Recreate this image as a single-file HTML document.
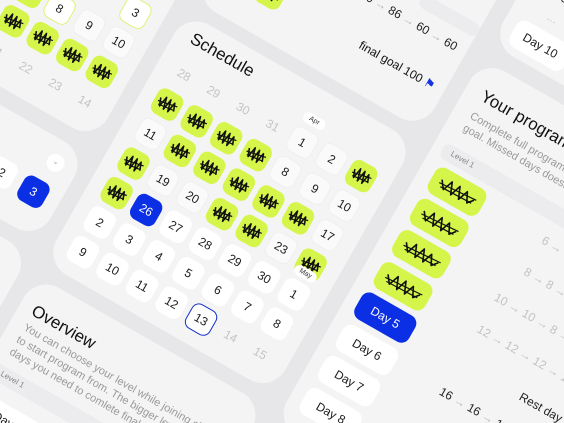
<!DOCTYPE html>
<html><head><meta charset="utf-8"><style>
html,body{margin:0;padding:0;width:564px;height:423px;overflow:hidden}
body{background:#e7e7e9;font-family:"Liberation Sans",sans-serif}
#clip{position:relative;width:564px;height:423px;overflow:hidden}
#w{position:absolute;left:0;top:0;transform-origin:0 0;transform:rotate(29.7deg)}
.card{position:absolute;background:#f4f4f5;border-radius:26px}
.c{position:absolute;width:28px;height:28px;border-radius:8px;display:flex;align-items:center;justify-content:center;font-size:12px;color:#1a1a1a;box-sizing:border-box}
.wh{background:#fff}
.lw{background:#fafafa;border:1px solid #efeff0}
.gr{color:#c4c4c6}
.g{background:#d6f54a}
.b{background:#0b2fe4;color:#fff}
.ob{border:1.6px solid #1230c8;background:#fff}
.og{border:1.6px solid #dcf27a;background:#fff}
.tag{position:absolute;width:24px;height:11px;border-radius:6px;background:#fff;font-size:7px;color:#333;display:flex;align-items:center;justify-content:center}
.t{position:absolute;white-space:nowrap}
.pill{position:absolute;width:62px;height:30px;border-radius:9px;display:flex;align-items:center;justify-content:center;font-size:12px;color:#1a1a1a;background:#fff}
.gp{position:absolute;width:58px;height:30px;border-radius:9px;background:#d6f54a}
svg{display:block}
</style></head><body>
<div id="clip">
<div id="w">
<div class="card" style="left:-220px;top:-320px;width:372px;height:395px"></div>
<div class="card" style="left:-220px;top:91px;width:372px;height:99px"></div>
<div class="card" style="left:-220px;top:205px;width:372px;height:250px"></div>
<div class="card" style="left:168px;top:-420px;width:263px;height:324px"></div>
<div class="card" style="left:168px;top:-82px;width:263px;height:288px"></div>
<div class="card" style="left:168px;top:221px;width:263px;height:220px"></div>
<div class="card" style="left:448px;top:-420px;width:300px;height:215px"></div>
<div class="card" style="left:448px;top:-188px;width:300px;height:420px"></div>

<div class="c og" style="left:110px;top:-70px">3</div>
<div class="c g" style="left:8px;top:-36px"></div>
<div class="c og" style="left:42px;top:-36px">8</div>
<div class="c lw" style="left:76px;top:-36px">9</div>
<div class="c lw" style="left:110px;top:-36px">10</div>
<div class="c g" style="left:8px;top:-2px"></div>
<div class="c g" style="left:42px;top:-2px"></div>
<div class="c g" style="left:76px;top:-2px"></div>
<div class="c g" style="left:110px;top:-2px"></div>
<div class="c gr" style="left:8px;top:32px">21</div>
<div class="c gr" style="left:42px;top:32px">22</div>
<div class="c gr" style="left:76px;top:32px">23</div>
<div class="c gr" style="left:110px;top:32px">14</div>
<div class="c wh" style="left:73px;top:135px">2</div>
<div class="c b" style="left:110px;top:136px">3</div>
<div style="position:absolute;left:120px;top:105px;width:18px;height:18px;border-radius:9px;background:#fff;font-size:8px;color:#aaa;text-align:center;line-height:16px">⌄</div>

<div style="position:absolute;left:365px;top:-216px;width:66px;height:14px;background:#ececee;border-radius:6px"></div>
<div class="t" style="left:260px;width:160px;text-align:right;top:-192px;font-size:12px;color:#222">90 <span style="color:#bbb">→</span> 86 <span style="color:#bbb">→</span> 60 <span style="color:#bbb">→</span> 60</div>
<div class="t" style="left:280px;width:140px;text-align:right;top:-147px;font-size:12px;color:#111">final goal 100 <span style="color:#1533e0">⚑</span></div>
<div class="c g" style="left:218px;top:-154px"></div>

<div class="t" style="left:185px;top:-72px;font-size:17px;color:#111">Schedule</div>
<div class="c gr" style="left:183px;top:-40px">28</div>
<div class="c gr" style="left:217px;top:-40px">29</div>
<div class="c gr" style="left:251px;top:-40px">30</div>
<div class="c gr" style="left:285px;top:-40px">31</div>
<div class="c lw" style="left:319px;top:-40px">1</div>
<div class="tag" style="left:321px;top:-56px">Apr</div>
<div class="c lw" style="left:353px;top:-40px">2</div>
<div class="c g" style="left:387px;top:-40px"></div>

<div class="c g" style="left:183px;top:-6px"></div>
<div class="c g" style="left:217px;top:-6px"></div>
<div class="c g" style="left:251px;top:-6px"></div>
<div class="c g" style="left:285px;top:-6px"></div>
<div class="c lw" style="left:319px;top:-6px">8</div>
<div class="c lw" style="left:353px;top:-6px">9</div>
<div class="c lw" style="left:387px;top:-6px">10</div>

<div class="c lw" style="left:183px;top:28px">11</div>
<div class="c g" style="left:217px;top:28px"></div>
<div class="c g" style="left:251px;top:28px"></div>
<div class="c g" style="left:285px;top:28px"></div>
<div class="c g" style="left:319px;top:28px"></div>
<div class="c g" style="left:353px;top:28px"></div>
<div class="c lw" style="left:387px;top:28px">17</div>

<div class="c g" style="left:183px;top:62px"></div>
<div class="c lw" style="left:217px;top:62px">19</div>
<div class="c lw" style="left:251px;top:62px">20</div>
<div class="c g" style="left:285px;top:62px"></div>
<div class="c g" style="left:319px;top:62px"></div>
<div class="c lw" style="left:353px;top:62px">23</div>
<div class="c g" style="left:387px;top:62px"></div>

<div class="c g" style="left:183px;top:96px"></div>
<div class="c b" style="left:217px;top:96px">26</div>
<div class="c wh" style="left:251px;top:96px">27</div>
<div class="c wh" style="left:285px;top:96px">28</div>
<div class="c wh" style="left:319px;top:96px">29</div>
<div class="c wh" style="left:353px;top:96px">30</div>
<div class="c wh" style="left:387px;top:96px">1</div>
<div class="tag" style="left:389px;top:81px">May</div>

<div class="c wh" style="left:183px;top:130px">2</div>
<div class="c wh" style="left:217px;top:130px">3</div>
<div class="c wh" style="left:251px;top:130px">4</div>
<div class="c wh" style="left:285px;top:130px">5</div>
<div class="c wh" style="left:319px;top:130px">6</div>
<div class="c wh" style="left:353px;top:130px">7</div>
<div class="c wh" style="left:387px;top:130px">8</div>

<div class="c wh" style="left:183px;top:164px">9</div>
<div class="c wh" style="left:217px;top:164px">10</div>
<div class="c wh" style="left:251px;top:164px">11</div>
<div class="c wh" style="left:285px;top:164px">12</div>
<div class="c ob" style="left:319px;top:164px">13</div>
<div class="c gr" style="left:353px;top:164px">14</div>
<div class="c gr" style="left:387px;top:164px">15</div>

<div class="t" style="left:182px;top:243px;font-size:17px;color:#111">Overview</div>
<div class="t" style="left:183px;top:265px;font-size:11px;line-height:14px;color:#9a9a9c">You can choose your level while joining challenge<br>to start program from. The bigger level the less<br>days you need to comlete final goal.</div>
<div style="position:absolute;left:176px;top:316px;width:250px;height:17px;background:#ececee;border-radius:7px"></div>
<div class="t" style="left:186px;top:319px;font-size:8px;color:#888">Level 1</div>
<div class="pill" style="left:185px;top:348px">Day 1</div>

<div class="t" style="left:462px;top:-288px;font-size:12px;color:#222">Day 9</div>
<div class="t" style="left:484px;top:-260px;font-size:10px;color:#bbb">···</div>
<div class="pill" style="left:461px;top:-243px">Day 10</div>

<div class="t" style="left:466px;top:-166px;font-size:17px;color:#111">Your program</div>
<div class="t" style="left:466px;top:-140px;font-size:11px;line-height:14px;color:#9a9a9c">Complete full program or reach your<br>goal. Missed days doesn't count.</div>
<div style="position:absolute;left:458px;top:-98px;width:280px;height:17px;background:#ececee;border-radius:7px"></div>
<div class="t" style="left:468px;top:-95px;font-size:8px;color:#888">Level 1</div>
<div class="gp" style="left:463px;top:-75px"></div>
<div class="gp" style="left:463px;top:-39px"></div>
<div class="gp" style="left:463px;top:-3px"></div>
<div class="gp" style="left:463px;top:34px"></div>
<div class="pill" style="left:461px;top:70px;color:#fff;background:#0b2fe4">Day 5</div>
<div class="pill" style="left:461px;top:107px">Day 6</div>
<div class="pill" style="left:461px;top:143px">Day 7</div>
<div class="pill" style="left:461px;top:180px">Day 8</div>
<div class="t" style="left:590px;top:-68px;font-size:12px;color:#c2c2c4">6 → 6 → 6</div>
<div class="t" style="left:590px;top:-32px;font-size:12px;color:#c2c2c4">8 → 8 → 6</div>
<div class="t" style="left:577px;top:5px;font-size:12px;color:#c2c2c4">10 → 10 → 8 → 8</div>
<div class="t" style="left:578px;top:41px;font-size:12px;color:#c2c2c4">12 → 12 → 12 → 10</div>
<div class="t" style="left:648px;top:79px;font-size:12px;color:#222">Rest day</div>
<div class="t" style="left:576px;top:114px;font-size:12px;color:#222">16 <span style="color:#bbb">→</span> 16 <span style="color:#bbb">→</span> 14</div>
</div>
</div>
<script>
(function(){
var zig='<svg width="28" height="28" viewBox="0 0 28 28"><path d="M5 11 L8 19 L10 8 L13 20 L15 8 L18 20 L20 9 L23 17" fill="none" stroke="#111" stroke-width="1.6" stroke-linejoin="round"/><path d="M4 15 L24 11 M6 18 L22 16" stroke="#111" stroke-width="1.2"/></svg>';
document.querySelectorAll('.c.g').forEach(function(e){e.innerHTML=zig;});
var big='<svg width="58" height="30" viewBox="0 0 58 30"><path d="M10 12 L16 20 L20 9 L25 21 L29 9 L34 21 L38 10 L43 20 L48 14" fill="none" stroke="#111" stroke-width="1.6" stroke-linejoin="round"/><path d="M9 16 L50 13 M12 19 L47 18" stroke="#111" stroke-width="1.2"/></svg>';
document.querySelectorAll('.gp').forEach(function(e){e.innerHTML=big;});
})();
</script>
</body></html>
